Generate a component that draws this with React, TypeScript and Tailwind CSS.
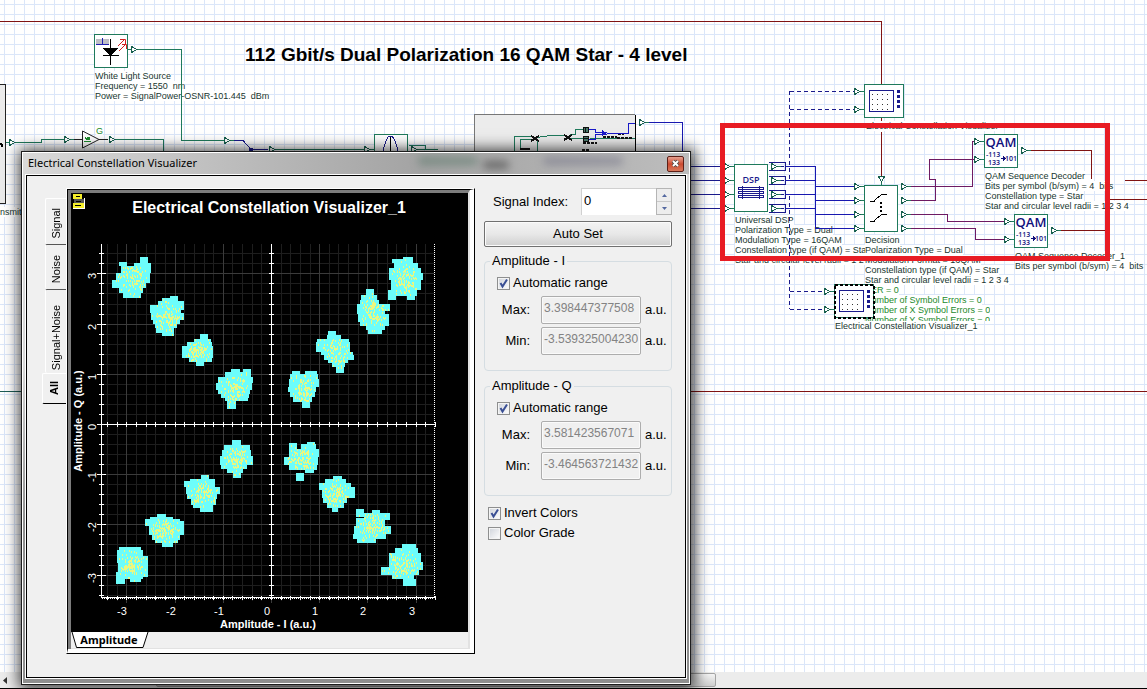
import { useState, type ReactNode } from "react";

type Span = [x1: number, y1: number, x2: number, y2: number];

const TEAL = "#1f7a5c";
const NAVY = "#1a1a8c";
const MAROON = "#801414";
const PURPLE = "#6e1a63";

// one list of rectangles for every cluster of received symbols
const clusters: Span[][] = [
  [[140, 257, 148, 265], [119, 262, 127, 266], [134, 263, 151, 266], [121, 266, 151, 273], [116, 273, 150, 280], [112, 280, 150, 283], [112, 283, 146, 288], [119, 288, 143, 293], [123, 293, 141, 298]],
  [[170, 296, 178, 299], [162, 298, 178, 301], [158, 301, 184, 305], [150, 305, 184, 310], [150, 310, 181, 313], [151, 313, 184, 320], [153, 320, 180, 324], [155, 324, 177, 328], [156, 328, 174, 333], [162, 333, 174, 336]],
  [[200, 334, 208, 339], [194, 339, 211, 342], [187, 342, 212, 346], [182, 346, 213, 358], [189, 358, 212, 362], [196, 362, 204, 366]],
  [[231, 369, 240, 373], [243, 369, 251, 373], [225, 372, 251, 377], [218, 377, 253, 383], [216, 383, 252, 390], [218, 390, 250, 394], [221, 394, 249, 398], [225, 398, 248, 401], [227, 401, 236, 409]],
  [[232, 440, 241, 445], [224, 445, 250, 450], [222, 450, 251, 456], [220, 456, 253, 465], [221, 465, 247, 469], [227, 469, 243, 473], [233, 473, 241, 478]],
  [[201, 475, 209, 480], [190, 479, 215, 481], [184, 481, 215, 487], [186, 487, 220, 494], [187, 494, 217, 499], [191, 499, 216, 505], [193, 505, 213, 508], [200, 508, 213, 512]],
  [[157, 514, 166, 517], [150, 517, 173, 520], [145, 519, 180, 526], [149, 521, 184, 535], [152, 535, 180, 540], [155, 540, 178, 543], [162, 543, 173, 547]],
  [[119, 547, 141, 550], [117, 550, 143, 556], [117, 556, 148, 563], [118, 563, 148, 572], [116, 572, 148, 577], [116, 577, 125, 584], [125, 577, 143, 579], [130, 579, 141, 582]],
  [[403, 257, 413, 260], [392, 259, 413, 263], [394, 263, 418, 268], [389, 268, 421, 273], [389, 273, 423, 280], [391, 280, 421, 290], [388, 290, 417, 296], [388, 296, 396, 300], [407, 296, 415, 300]],
  [[366, 289, 374, 295], [361, 295, 377, 300], [360, 300, 379, 305], [357, 304, 390, 311], [357, 311, 385, 314], [358, 314, 389, 322], [360, 322, 389, 326], [366, 326, 385, 330], [368, 330, 382, 334]],
  [[328, 331, 336, 335], [327, 335, 341, 339], [317, 339, 349, 342], [316, 342, 350, 352], [321, 352, 353, 355], [324, 355, 354, 360], [328, 360, 348, 363], [332, 363, 345, 367], [336, 367, 344, 373]],
  [[292, 371, 300, 374], [305, 371, 317, 374], [290, 374, 318, 379], [289, 379, 319, 387], [288, 387, 316, 392], [290, 392, 315, 397], [293, 397, 312, 402], [302, 402, 310, 408]],
  [[289, 443, 297, 449], [301, 444, 316, 449], [307, 442, 315, 445], [289, 449, 319, 457], [284, 457, 318, 465], [289, 465, 317, 470], [305, 470, 314, 473], [296, 473, 304, 481]],
  [[333, 476, 342, 479], [325, 479, 346, 483], [319, 483, 351, 490], [322, 487, 355, 498], [323, 498, 347, 503], [327, 503, 344, 508], [332, 508, 338, 512]],
  [[356, 509, 364, 517], [372, 510, 380, 515], [364, 513, 390, 520], [356, 518, 385, 526], [354, 526, 391, 534], [353, 534, 386, 539], [357, 539, 376, 543]],
  [[402, 544, 416, 548], [395, 548, 418, 553], [389, 553, 421, 562], [389, 562, 423, 570], [381, 567, 419, 575], [392, 575, 414, 579], [403, 579, 416, 586]],
];

// small seeded generator, so the specks stay in place between renders
let seed = 7;
const random = () => {
  seed = (seed * 16807) % 2147483647;
  return seed / 2147483647;
};

const specks = (spans: Span[]) => {
  const left = Math.min(...spans.map((s) => s[0]));
  const right = Math.max(...spans.map((s) => s[2]));
  const top = Math.min(...spans.map((s) => s[1]));
  const bottom = Math.max(...spans.map((s) => s[3]));
  let d = "";
  for (let i = 0; i < 150; i++) {
    const dx = ((random() + random() + random()) / 3 - 0.5) * (right - left) * 1.1;
    const dy = ((random() + random() + random()) / 3 - 0.5) * (bottom - top) * 1.1;
    const x = Math.round((left + right) / 2 + dx);
    const y = Math.round((top + bottom) / 2 + dy);
    const inside = spans.some((s) => x > s[0] && x < s[2] - 1 && y >= s[1] && y < s[3] - 1);
    if (inside) d += `M${x} ${y}h1v2h-1z`;
  }
  return d;
};

const clusterPaths = clusters.map((spans) => ({
  body: spans.map(([x1, y1, x2, y2]) => `M${x1} ${y1}H${x2}V${y2}H${x1}Z`).join(""),
  specks: specks(spans),
}));

const xAt = (v: number) => Math.round(271 + v * 48.2);
const yAt = (v: number) => Math.round(424 - v * 50.2);
const majors = [-3, -2, -1, 0, 1, 2, 3];
const minors = Array.from({ length: 35 }, (_, i) => (i - 17) / 5);

const ConstellationChart = () => (
  <svg
    viewBox="71 193 397 439"
    className="block h-[439px] w-[397px] bg-black"
    shapeRendering="crispEdges"
    fontFamily="Liberation Sans, Arial, sans-serif"
    fontSize={11}
    fill="white"
  >
    {/* GRID */}
    <g stroke="#1e1e1e">
      {minors.map((v) => (
        <g key={v}>
          {xAt(v) > 101 && xAt(v) < 435 && <path d={`M${xAt(v) + 0.5} 244V601`} />}
          {yAt(v) > 243 && yAt(v) < 597 && <path d={`M101 ${yAt(v) + 0.5}H434`} />}
        </g>
      ))}
    </g>
    <g stroke="#3b3b3b">
      {majors.map((v) => (
        <g key={v}>
          <path d={`M${xAt(v) + 0.5} 244V603`} />
          <path d={`M101 ${yAt(v) + 0.5}H434`} />
        </g>
      ))}
    </g>
    {/* AXES */}
    <g stroke="white" fill="none">
      <path d="M101.500 244V598M271.500 244V598M101 424.500H436M101 597.500H436" />
      <path d="M102 598.500H434" strokeDasharray="1 1" />
      <path d="M434.500 244V598" strokeDasharray="1 1" />
      {minors.map((v) => (
        <g key={v}>
          {xAt(v) > 101 && xAt(v) < 436 && (
            <path d={`M${xAt(v) + 0.5} 422V427M${xAt(v) + 0.5} 596V600`} />
          )}
          {yAt(v) > 243 && yAt(v) < 598 && (
            <path d={`M99 ${yAt(v) + 0.5}H104M269 ${yAt(v) + 0.5}H274`} />
          )}
        </g>
      ))}
      {majors.map((v) => (
        <path key={v} d={`M97 ${yAt(v) + 0.5}H106`} />
      ))}
    </g>
    {/* CLUSTERS */}
    {clusterPaths.map((c, i) => (
      <g key={i}>
        <path d={c.body} fill="#6cfdfb" />
        <path d={c.specks} fill="#ecf77e" />
      </g>
    ))}
    {/* LABELS */}
    {majors.map((v) => (
      <g key={v} textAnchor="middle">
        <text x={xAt(v) - 4} y={615}>{v}</text>
        <text transform={`translate(96 ${yAt(v) + 3}) rotate(-90)`}>{v}</text>
      </g>
    ))}
    <g textAnchor="middle" fontWeight="bold">
      <text x={269} y={213} fontSize={16}>Electrical Constellation Visualizer_1</text>
      <text x={268} y={628}>Amplitude - I (a.u.)</text>
      <text transform="translate(82 421) rotate(-90)">Amplitude - Q (a.u.)</text>
    </g>
    {/* menu glyph in the corner */}
    <path d="M73 194h9v5h-9z" fill="#f5ee2a" />
    <path d="M74 199h10v4h-10z" fill="#555" />
    <path d="M73 203h12v5h-12z" fill="#f5ee2a" />
    <path d="M84 198h1v11h-12v-1h11z" fill="white" />
    <path d="M76 196h4v1h-4zM76 201h5v1h-5zM75 205h6v1h-6z" fill="black" />
  </svg>
);

const Port = ({ x, y, down }: { x: number; y: number; down?: boolean }) => (
  <g transform={`translate(${x} ${y})${down ? " rotate(90)" : ""}`} stroke={TEAL}>
    <path d="M3 .5H7" />
    <path d="M-2.500 -2.500L3 .5L-2.500 3.500Z" fill="white" stroke="#17604f" />
  </g>
);

const QamBlock = ({ x, y }: { x: number; y: number }) => (
  <g transform={`translate(${x} ${y})`} fill="#10107c" fontFamily="Open Sans, sans-serif">
    <rect x={0.5} y={0.5} width={33} height={33} fill="white" stroke={TEAL} />
    <text x={17} y={13} fontSize={13} textAnchor="middle" fontWeight="600">
      QAM
    </text>
    <g fontSize={7} fontWeight="600">
      <text x={2} y={23}>-113</text>
      <text x={4} y={31}>133</text>
      <text x={21} y={27}>101</text>
    </g>
    <path d="M17 24.500H21M19 22.500L21 24.500L19 26.500" stroke="#10107c" fill="none" />
  </g>
);

const ScopeBlock = ({ x, y, selected }: { x: number; y: number; selected?: boolean }) => (
  <g transform={`translate(${x} ${y})`}>
    <rect x={0.5} y={0.5} width={39} height={33} fill="white" stroke={TEAL} />
    {selected && (
      <rect x={0.5} y={0.5} width={39} height={33} fill="none" stroke="black" strokeWidth={2} strokeDasharray="3 2" />
    )}
    <rect x={5.5} y={6.5} width={24} height={21} fill="white" stroke={NAVY} />
    {[10, 15, 20, 25].map((cy) => (
      <path key={cy} d={`M8 ${cy}.500H28`} stroke="#333" strokeDasharray="1 4" />
    ))}
    <path d="M33 6h3v3h-3zM33 11h3v3h-3zM33 16h3v3h-3zM33 21h3v3h-3z" fill={NAVY} />
  </g>
);

const Schematic = () => (
  <svg className="absolute inset-0 h-full w-full" shapeRendering="crispEdges" fill="none">
    <g stroke={MAROON}>
      <path d="M0 21.500H881.500V84M881.500 117V121M881.500 132V178" />
      <path d="M1027 150.500H1091.500V179M1125 180.500H1147M1110 199.500H1147M1057 230.500H1105" />
      <path d="M690 391.500H1147" />
    </g>
    <g stroke={TEAL}>
      <path d="M6 142.500H41.500V139.500H66M114 139.500H163.500V152" />
      <path d="M127 49.500H181.500V140.500H226M274 149.500H374M409 145.500H425.500V149.500M416 149.500H438" />
      <path d="M0 391.500H21" stroke="#1d5c55" />
    </g>
    <path d="M230 140.500H243L251 149.500H268" stroke={NAVY} />
    <path d="M249 148h4v4h-4z" fill={NAVY} />
    <path d="M0 84.500H5.500V203.500H0" fill="#ebebeb" stroke="#222" />
    <path d="M0 143.500L2 144.500V147" stroke="#000" strokeWidth={2} />

    {/* amplifier */}
    <path d="M74 139.500H82M98 139.500H108" stroke="#222" />
    <path d="M82.500 131L99 139.500L82.500 148Z" fill="white" stroke="#222" shapeRendering="auto" />
    <path d="M84 141.500h7M85 137l2 3 1-3 1 3 1-3" stroke="#1c8a2c" />

    {/* light source */}
    <rect x={94.500} y={34.500} width={33} height={33} fill="white" stroke={TEAL} />
    <path d="M96 39h13v5h-13z" fill="#bdbdc6" />
    <path d="M96 44.500H109M102.500 38V44" stroke="#2020b0" />
    <path d="M110.500 39V65M103 55.500H119" stroke="#000" />
    <path d="M103 48H118L110.500 56Z" fill="#000" />
    <path
      d="M118 46L125 39M120 39.500H125.500V44M119 51L126 44M122 44.500H126.500V49"
      stroke="#d02020"
      shapeRendering="auto"
    />

    {/* filter */}
    <rect x={374.500} y={134.500} width={33} height={34} fill="white" stroke={TEAL} />
    <path d="M390.500 136V152" stroke="#000" />
    <path d="M383 152Q386 136 390.500 136Q395 136 398 152" stroke={NAVY} />

    {/* receiver subsystem */}
    <path d="M474.500 152V114.500H635" fill="#ececec" stroke="#777" />
    <path d="M475 115H635V152H475Z" fill="#ececec" />
    <path d="M635.500 115V152" stroke="#000" />
    <g stroke={TEAL}>
      <path d="M514.500 152V136.500H531M520 149V139.500H531M537 137.500L550 135.500H565M570 134.500H575.500V129.500H583M568 138.500H583M590 138.500H635M537.500 141V152" />
    </g>
    <g stroke="#111">
      <path d="M531 136L539 141M539 136L531 141M564 135L572 140M572 135L564 140" strokeWidth={2} />
      <path d="M583.500 127.500h5v5h-5zM583.500 136.500h5v5h-5zM585.500 127V133M583 138.500H589" fill="#4a7a6c" />
      <path d="M583 143H597M603 137H617M617 138H632M618 134H624M582 150H589" strokeWidth={2} strokeDasharray="3 1" />
      <path d="M520 149H530" strokeWidth={2} />
    </g>
    <path d="M589 129.500H595.500V132.500H607M589 139.500H595.500V134.500H607M607 133.500H628.500V123.500H635" stroke="#1818c8" />
    <path d="M602 130L607 133L602 136Z" fill="#1818c8" />

    {/* wires into and out of the DSP */}
    <g stroke={NAVY}>
      <path d="M645 122.500H682.500V152" stroke="#1818b0" />
      <path d="M690 166.500H725M690 180.500H725M690 194.500H725M690 208.500H725" />
      <path d="M786 166.500H815.500V228.500H856M786 180.500H815M786 194.500H815M786 208.500H815M815 186.500H856M815 200.500H856M815 214.500H856" stroke="#1818b0" />
      <path d="M789.500 91V180M789.500 196V309M790 91.500H856M790 109.500H856M790 291.500H826M790 309.500H826" strokeDasharray="4 3" />
      {[166, 180, 194, 208].map((y) => (
        <path key={y} d={`M769 ${y - 3.5}H785.500V${y + 4.5}H769M778 ${y}.500H784`} />
      ))}
    </g>
    <g stroke={PURPLE}>
      <path d="M907 186.500H972.500V141.500H976M907 200.500H935.500V179.500H929.500V159.500H976" />
      <path d="M907 214.500H947.500V221.500H1006M907 228.500H975.500V239.500H1006" />
    </g>

    {/* DSP */}
    <rect x={734.500} y={164.500} width={33} height={47} fill="white" stroke={TEAL} />
    <text x={751} y={183} fontSize={9} textAnchor="middle" fontFamily="Open Sans, sans-serif" fontWeight="600" fill={NAVY}>
      DSP
    </text>
    <path d="M738.500 187.500h25v2h-25zM738.500 191.500h25v2h-25zM738.500 195.500h25v2h-25zM742.500 186V199M759.500 186V199" stroke={NAVY} />

    {/* decision */}
    <rect x={864.500} y={185.500} width={33} height={46} fill="white" stroke={TEAL} />
    <path d="M870 201.500H874L877 198L882 194.500H887M870 221.500H874L877 218L882 214.500H887" stroke="#000" />
    <path d="M881 202v11" stroke="#000" strokeWidth={2} strokeDasharray="2 2" />

    <ScopeBlock x={864} y={84} />
    <ScopeBlock x={834} y={284} selected />
    <QamBlock x={984} y={134} />
    <QamBlock x={1014} y={214} />

    <Port x={12} y={142} />
    <Port x={67} y={139} />
    <Port x={112} y={139} />
    <Port x={134} y={49} />
    <Port x={227} y={140} />
    <Port x={272} y={149} />
    <Port x={367} y={149} />
    <Port x={414} y={149} />
    <Port x={642} y={122} />
    <Port x={882} y={179} down />
    {[166, 180, 194, 208].map((y) => (
      <g key={y}>
        <Port x={727} y={y} />
        <Port x={774} y={y} />
      </g>
    ))}
    {[186, 200, 214, 228].map((y) => (
      <g key={y}>
        <Port x={857} y={y} />
        <Port x={904} y={y} />
      </g>
    ))}
    <Port x={857} y={91} />
    <Port x={857} y={109} />
    <Port x={827} y={291} />
    <Port x={827} y={309} />
    <Port x={977} y={141} />
    <Port x={977} y={159} />
    <Port x={1024} y={150} />
    <Port x={1007} y={221} />
    <Port x={1007} y={239} />
    <Port x={1054} y={230} />

    {/* highlight */}
    <rect x={722.500} y={125.500} width={385} height={133} stroke="#e81c24" strokeWidth={5} />
  </svg>
);

const Label = ({ className, lines }: { className: string; lines: string[] }) => (
  <div className={`absolute flex flex-col items-start text-[9px] leading-[10px] whitespace-pre text-[#17362f] ${className}`}>
    {lines.map((line) => (
      <span key={line} className="bg-white">{line}</span>
    ))}
  </div>
);

const TickBox = ({ label, checked, onChange }: { label: string; checked: boolean; onChange: (v: boolean) => void }) => (
  <label className="flex items-center gap-[3px] text-[13px] leading-5">
    <span className="relative flex size-[13px]">
      <input
        type="checkbox"
        checked={checked}
        onChange={(e) => onChange(e.target.checked)}
        className="size-[13px] appearance-none border border-[#8e8f8f] bg-linear-to-br from-[#cfd3da] to-white shadow-[inset_0_0_0_1px_#f4f4f4]"
      />
      {checked && (
        <svg viewBox="0 0 13 13" className="pointer-events-none absolute inset-0 size-[13px]">
          <path d="M3.500 6L5.500 9.500L10 2.500" fill="none" stroke="#3a4f94" strokeWidth={2} />
        </svg>
      )}
    </span>
    {label}
  </label>
);

const RangeField = ({ id, label, value }: { id: string; label: string; value: string }) => (
  <div className="flex items-center">
    <label htmlFor={id} className="w-[45px] text-right text-[13px]">{label}</label>
    <input
      id={id}
      defaultValue={value}
      disabled
      className="ml-[11px] h-7 w-[100px] rounded-xs border border-[#adadad] px-[2px] pb-1 text-xs text-[#838383] shadow-[inset_0_0_0_1px_#fafafa]"
    />
    <span className="ml-1 text-[13px]">a.u.</span>
  </div>
);

const AmplitudeGroup = ({ axis, max, min }: { axis: string; max: string; min: string }) => {
  const [auto, setAuto] = useState(true);
  return (
    <fieldset className="rounded-sm border border-[#d5dde2] pb-[15px]">
      <legend className="ml-[5px] px-[2px] text-[13px] leading-4">Amplitude - {axis}</legend>
      <div className="pt-1 pl-3">
        <TickBox label="Automatic range" checked={auto} onChange={setAuto} />
      </div>
      <div className="flex flex-col gap-[3px] pt-[3px]">
        <RangeField id={`max-${axis}`} label="Max:" value={max} />
        <RangeField id={`min-${axis}`} label="Min:" value={min} />
      </div>
    </fieldset>
  );
};

const SideTab = ({ className, children }: { className: string; children: ReactNode }) => (
  <button
    className={`flex items-center justify-center rounded-l-xs border-t border-l border-white text-[11px] ${className}`}
  >
    <span className="rotate-180 [writing-mode:vertical-rl]">{children}</span>
  </button>
);

const VisualizerWindow = () => {
  const [signalIndex, setSignalIndex] = useState(0);
  const [invert, setInvert] = useState(true);
  const [grade, setGrade] = useState(false);

  return (
    <section className="absolute top-[151px] left-[21px] w-[670px] border border-[#1d1d1d] shadow-[1px_1px_14px_3px_rgba(0,0,0,0.75)]">
      <div className="border border-white bg-linear-to-b from-[#d8d8d8] from-40% to-[#8f8f8f] to-70%">
        {/* TITLE BAR */}
        <header className="relative flex h-[21px] items-center justify-between overflow-hidden bg-linear-to-r from-[#d9d9d9] via-[#a3a3a3] via-60% to-[#bdbdbd] pr-[5px] pl-[5px]">
          <div className="absolute top-1 left-[395px] h-2 w-[60px] rounded-full bg-[#5d7a6c] opacity-60 blur-xs" />
          <div className="absolute top-2 left-[460px] h-2 w-[26px] rounded-full bg-[#3c3c3c] opacity-60 blur-xs" />
          <div className="absolute top-1 left-[520px] h-2 w-[80px] rounded-full bg-[#6a6a80] opacity-50 blur-xs" />
          <h2 className="relative font-['Noto_Sans',sans-serif] text-[11px] text-black">
            Electrical Constellation Visualizer
          </h2>
          <button
            aria-label="Close"
            className="relative flex h-4 w-[17px] items-center justify-center rounded-xs border border-[#5c2018] bg-linear-to-b from-[#e5a090] via-[#cc4a30] to-[#d8785c]"
          >
            <svg viewBox="0 0 9 9" className="size-[9px]">
              <path d="M2 2L7 7M7 2L2 7" stroke="#444" strokeWidth={3.5} />
              <path d="M2 2L7 7M7 2L2 7" stroke="white" strokeWidth={2} />
            </svg>
          </button>
        </header>

        {/* CLIENT AREA */}
        <div className="mx-[2px] mb-1 border border-white">
          <div className="flex border border-black bg-[#f0f0f0] pt-3 pr-[13px] pb-[23px] pl-[15px]">
            <nav className="flex w-6 flex-col items-end pt-[10px]">
              <SideTab className="h-[46px] w-[21px] pt-1">Signal</SideTab>
              <SideTab className="h-[45px] w-[21px] border-t-[#555] pt-1">Noise</SideTab>
              <SideTab className="h-[84px] w-[21px] border-t-[#555] pt-3">Signal+Noise</SideTab>
              <SideTab className="h-[31px] w-6 border-b border-b-black font-bold">All</SideTab>
            </nav>

            <div className="border border-t-white border-r-black border-b-black border-l-white">
              <div className="border-t border-r-4 border-b-4 border-l border-t-black border-r-white border-b-white border-l-black">
                <div className="border-t-3 border-r-2 border-l-3 border-t-[#7c7c7c] border-r-[#e2e2e2] border-l-[#7c7c7c]">
                  <ConstellationChart />
                  <div className="h-[17px] border-b border-[#e2e2e2]">
                    <button className="relative block h-4 w-[78px]">
                      <svg viewBox="0 0 78 16" className="absolute inset-0 h-4 w-[78px]">
                        <path d="M0 0H77L72 15.500H5Z" fill="white" />
                        <path d="M1 0L5.500 15.500H72L77 0" fill="none" stroke="black" />
                      </svg>
                      <span className="relative block pr-[2px] font-['Noto_Sans',sans-serif] text-[11px] leading-4 font-bold">
                        Amplitude
                      </span>
                    </button>
                  </div>
                </div>
              </div>
            </div>

            {/* SETTINGS */}
            <form className="ml-[9px] flex flex-1 flex-col" onSubmit={(e) => e.preventDefault()}>
              <div className="flex h-[27px] items-center">
                <label htmlFor="signal-index" className="flex-1 pl-[9px] text-[13px]">Signal Index:</label>
                <input
                  id="signal-index"
                  value={signalIndex}
                  onChange={(e) => setSignalIndex(Number(e.target.value) || 0)}
                  className="h-[27px] w-[75px] border-t border-l border-[#d0d0d0] bg-white px-[2px] pb-1 text-[13px]"
                />
                <div className="flex h-[27px] w-4 flex-col border border-[#b5b5b5] bg-white">
                  <button
                    type="button"
                    aria-label="Increase"
                    onClick={() => setSignalIndex(signalIndex + 1)}
                    className="flex flex-1 items-center justify-center border-b border-[#c9c9c9] bg-[#ededed]"
                  >
                    <svg viewBox="0 0 5 3" className="h-[3px] w-[5px]"><path d="M0 3L2.500 0L5 3Z" fill="#5468a0" /></svg>
                  </button>
                  <button
                    type="button"
                    aria-label="Decrease"
                    onClick={() => setSignalIndex(Math.max(0, signalIndex - 1))}
                    className="flex flex-1 items-center justify-center bg-[#ededed]"
                  >
                    <svg viewBox="0 0 5 3" className="h-[3px] w-[5px]"><path d="M0 0L2.500 3L5 0Z" fill="#5468a0" /></svg>
                  </button>
                </div>
              </div>
              <button
                type="button"
                className="mt-[6px] mb-[6px] h-[26px] rounded-xs border border-[#707070] bg-linear-to-b from-[#f3f3f3] via-[#e8e8e8] to-[#cfcfcf] text-[13px] shadow-[inset_0_0_0_1px_#fbfbfb]"
              >
                Auto Set
              </button>
              <div className="flex flex-col gap-[7px]">
                <AmplitudeGroup axis="I" max="3.398447377508" min="-3.5393250042301" />
                <AmplitudeGroup axis="Q" max="3.581423567071" min="-3.4645637214321" />
              </div>
              <div className="flex flex-col pt-[7px] pl-1">
                <TickBox label="Invert Colors" checked={invert} onChange={setInvert} />
                <TickBox label="Color Grade" checked={grade} onChange={setGrade} />
              </div>
            </form>
          </div>
        </div>
      </div>
    </section>
  );
};

export default function App() {
  return (
    <main className="relative flex h-screen flex-col overflow-hidden bg-white font-['Liberation_Sans',Arial,sans-serif] text-black">
      {/* CANVAS */}
      <div className="relative flex-1 overflow-hidden bg-[linear-gradient(to_right,#dbe6f9_1px,transparent_1px),linear-gradient(to_bottom,#dbe6f9_1px,transparent_1px)] bg-[size:10px_10px] bg-[position:4px_4px]">
        <h1 className="absolute top-[43px] left-[245px] text-[19px] leading-6 font-bold whitespace-nowrap">
          112 Gbit/s Dual Polarization 16 QAM Star - 4 level
        </h1>
        <Label
          className="top-[71px] left-[95px]"
          lines={["White Light Source", "Frequency = 1550  nm", "Power = SignalPower-OSNR-101.445  dBm"]}
        />
        <Label className="top-[126px] left-[96px] text-[#1c8a2c]!" lines={["G"]} />
        <Label className="top-[207px] left-0" lines={["nsmitter"]} />
        <Label className="top-[121px] left-[866px]" lines={["Electrical Constellation Visualizer"]} />
        <Label
          className="top-[215px] left-[735px]"
          lines={[
            "Universal DSP",
            "Polarization Type = Dual",
            "Modulation Type = 16QAM",
            "Constellation type (if QAM) = Star",
            "Star and circular level radii = 1 2 3 4",
          ]}
        />
        <Label
          className="top-[235px] left-[865px]"
          lines={[
            "Decision",
            "Polarization Type = Dual",
            "Modulation Format = 16QAM",
            "Constellation type (if QAM) = Star",
            "Star and circular level radii = 1 2 3 4",
          ]}
        />
        <Label
          className="top-[285px] left-[865px] h-9 overflow-hidden text-[#1c8a2c]!"
          lines={["SER = 0", "Number of Symbol Errors = 0", "Number of X Symbol Errors = 0", "Number of Y Symbol Errors = 0"]}
        />
        <Label
          className="top-[171px] left-[985px]"
          lines={[
            "QAM Sequence Decoder",
            "Bits per symbol (b/sym) = 4  bits",
            "Constellation type = Star",
            "Star and circular level radii = 1 2 3 4",
          ]}
        />
        <Label
          className="top-[251px] left-[1015px]"
          lines={["QAM Sequence Decoder_1", "Bits per symbol (b/sym) = 4  bits"]}
        />
        <Label className="top-[321px] left-[835px]" lines={["Electrical Constellation Visualizer_1"]} />
        <Schematic />
      </div>

      {/* SCROLL BAR */}
      <div className="flex h-[17px] items-stretch border-b border-black bg-[#ececec]">
        <div className="flex w-[156px] items-center pl-[3px]">
          <svg viewBox="0 0 4 7" className="h-[7px] w-1"><path d="M4 0L0 3.500L4 7Z" fill="#333" /></svg>
        </div>
        <div className="my-px w-[560px] rounded-xs border border-[#a5a5a5] bg-linear-to-b from-[#f5f5f5] to-[#cfcfcf]" />
      </div>

      <VisualizerWindow />
    </main>
  );
}
